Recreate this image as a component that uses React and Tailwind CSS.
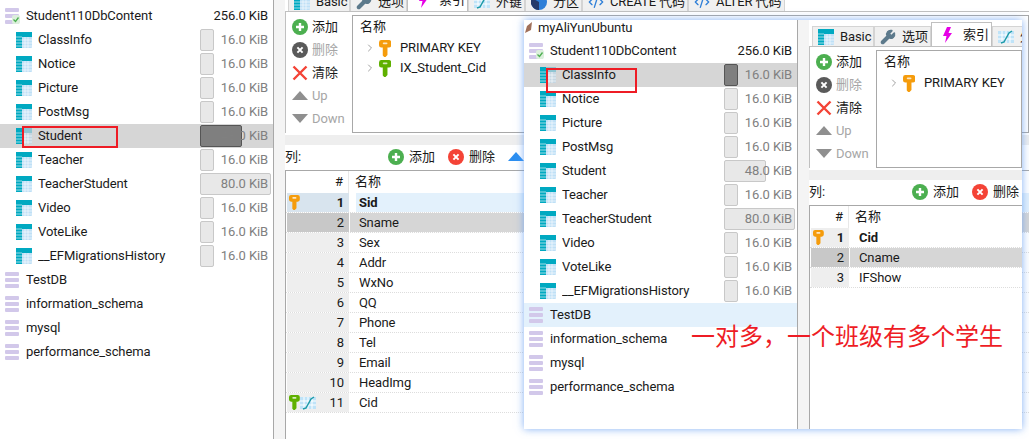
import React from "react";
import { ChevronRight, Wrench, CodeXml } from "lucide-react";

const tableItems = [
	{ name: "ClassInfo", size: 16 },
	{ name: "Notice", size: 16 },
	{ name: "Picture", size: 16 },
	{ name: "PostMsg", size: 16 },
	{ name: "Student", size: 48 },
	{ name: "Teacher", size: 16 },
	{ name: "TeacherStudent", size: 80 },
	{ name: "Video", size: 16 },
	{ name: "VoteLike", size: 16 },
	{ name: "__EFMigrationsHistory", size: 16 },
];

const otherDbs = ["TestDB", "information_schema", "mysql", "performance_schema"];

const studentColumns = [
	"Sid", "Sname", "Sex", "Addr", "WxNo", "QQ", "Phone", "Tel", "Email", "HeadImg", "Cid",
];

const TableIcon = ({ dim }) => (
	<svg width="16" height="16" viewBox="0 0 16 16" className="shrink-0">
		<rect x="0" y="0" width="16" height="16" rx="1" fill={dim ? "#c4d6e2" : "#bfe0f6"} />
		<rect x="0" y="0" width="16" height="5" fill={dim ? "#8fc5d2" : "#00a9c1"} />
		<rect x="0" y="0" width="6" height="16" fill="#00a9c1" />
		<path d="M6 8h10M6 11h10M6 14h10M9 5v11M12 5v11M0 5h6M0 8h6M0 11h6M0 14h6" stroke="#fff" strokeOpacity="0.6" strokeWidth="1" />
	</svg>
);

const DbIcon = ({ ok }) => (
	<svg width="16" height="16" viewBox="0 0 16 16" className="shrink-0">
		<rect x="1" y="0" width="14" height="4" rx="1" fill="#d2c8ea" />
		<rect x="1" y="6" width="14" height="4" rx="1" fill="#d2c8ea" />
		<rect x="1" y="12" width="14" height="4" rx="1" fill="#d2c8ea" />
		{ok && (
			<g>
				<rect x="8" y="7" width="8" height="9" rx="2" fill="#dcefdc" />
				<path d="M9.5 11.5l2 2 3-4" fill="none" stroke="#4caf50" strokeWidth="1.3" />
			</g>
		)}
	</svg>
);

const KeyIcon = ({ color, size = 18 }) => (
	<svg width={size * 0.72} height={size} viewBox="0 0 13 18" className="shrink-0">
		<path
			d="M2.5 0h8A2.5 2.5 0 0 1 13 2.5v3A2.5 2.5 0 0 1 10.5 8H9v8l-2 2H5.5L4 16.500V8H2.500A2.500 2.500 0 0 1 0 5.500v-3A2.500 2.500 0 0 1 2.500 0z"
			fill={color}
		/>
		<rect x="4" y="2.500" width="5" height="2" rx="1" fill="#fff" fillOpacity="0.75" />
	</svg>
);

const FkIcon = () => (
	<svg width="16" height="14" viewBox="0 0 16 14" className="shrink-0">
		<rect x="0" y="1" width="16" height="12" fill="#bfe3f8" />
		<path d="M0 5h16M0 9h16M4 1v12M8 1v12M12 1v12" stroke="#fff" strokeWidth="1" />
		<path d="M3 13l3-1 5-9 3-2" fill="none" stroke="#1d9aa8" strokeWidth="1.5" />
	</svg>
);

const ZapIcon = () => (
	<svg width="10" height="16" viewBox="0 0 10 16" className="shrink-0 mr-[5px]">
		<path d="M5 0h4L6.500 6H10L3 16l1.500-7H1z" fill="#e600e6" />
	</svg>
);

const PartitionIcon = () => (
	<svg width="16" height="16" viewBox="0 0 16 16" className="shrink-0">
		<circle cx="8" cy="8" r="8" fill="#2f7fd8" />
		<path d="M8 8L1 4a8 8 0 0 0 7 12z" fill="#243a6b" />
	</svg>
);

const CircleIcon = ({ color, plus }) => (
	<svg width="16" height="16" viewBox="0 0 16 16" className="shrink-0">
		<circle cx="8" cy="8" r="8" fill={color} />
		{plus ? (
			<path d="M8 4v8M4 8h8" stroke="#fff" strokeWidth="2.400" />
		) : (
			<path d="M5.400 5.400l5.200 5.200M10.600 5.400l-5.200 5.200" stroke="#fff" strokeWidth="2" />
		)}
	</svg>
);

const CrossIcon = () => (
	<svg width="16" height="16" viewBox="0 0 16 16" className="shrink-0">
		<path d="M1.500 1.500l13 13M14.500 1.500l-13 13" stroke="#f44336" strokeWidth="2.400" />
	</svg>
);

const Triangle = ({ down, color }) => (
	<svg width="16" height="9" viewBox="0 0 16 9" className="shrink-0">
		<path d={down ? "M0 0h16L8 9z" : "M8 0l8 9H0z"} fill={color} />
	</svg>
);

const TreeRow = ({ item, selected }) => {
	// bar width follows the table size
	const barWidth = item.size === 16 ? 14 : item.size === 48 ? 42 : 71;
	return (
		<div className={`flex items-center h-6 pl-[16px] ${selected ? "bg-[#d6d6d6]" : ""}`}>
			<TableIcon dim={selected} />
			<span className="ml-[6px] flex-1 truncate text-[#1a1a1a]">{item.name}</span>
			<div className="grid grid-cols-[68px] items-center mr-[5px] shrink-0">
				<div
					className={`col-start-1 row-start-1 h-[22px] rounded-[2px] border ${
						selected ? "bg-[#7f7f7f] border-[#555]" : "bg-[#e8e8e8] border-[#c8c8c8]"
					}`}
					style={{ width: barWidth }}
				/>
				<span className="col-start-1 row-start-1 text-right text-[#808080] z-10">
					{item.size}.0 KiB
				</span>
			</div>
		</div>
	);
};

const Tree = ({ selectedTable, hoverDb }) => (
	<div>
		<div className="flex items-center h-6 pl-[4px] pr-[5px]">
			<DbIcon ok />
			<span className="ml-[6px] flex-1 text-[#1a1a1a]">Student110DbContent</span>
			<span className="text-[#1a1a1a]">256.0 KiB</span>
		</div>
		{tableItems.map((item) => (
			<TreeRow key={item.name} item={item} selected={item.name === selectedTable} />
		))}
		{otherDbs.map((db) => (
			<div
				key={db}
				className={`flex items-center h-6 pl-[4px] ${db === hoverDb ? "bg-[#e3f1fc]" : ""}`}
			>
				<DbIcon />
				<span className="ml-[6px] text-[#1a1a1a]">{db}</span>
			</div>
		))}
	</div>
);

const Tab = ({ icon, label, active, widthClass }) => (
	<div
		className={`flex items-center gap-[6px] shrink-0 border border-b-0 ${widthClass} ${
			active ? "bg-white h-6 border-[#c0c0c0] pl-[10px]" : "bg-[#f0f0f0] h-5 border-[#d4d4d4] pl-[5px]"
		}`}
	>
		{icon}
		<span className="whitespace-nowrap text-[#1a1a1a]">{label}</span>
	</div>
);

const Tabs = ({ heightClass }) => (
	<div className={`flex items-end overflow-hidden pl-[3px] shrink-0 ${heightClass}`}>
		<Tab widthClass="w-[62px]" icon={<TableIcon />} label="Basic" />
		<Tab widthClass="w-[57px]" icon={<Wrench size={16} className="text-[#5d7a8c] fill-[#5d7a8c]" />} label="选项" />
		<Tab widthClass="w-[61px]" active icon={<ZapIcon />} label="索引" />
		<Tab widthClass="w-[57px]" icon={<FkIcon />} label="外键" />
		<Tab widthClass="w-[57px]" icon={<PartitionIcon />} label="分区" />
		<Tab widthClass="w-[106px]" icon={<CodeXml size={16} className="text-[#2f7fd8]" />} label="CREATE 代码" />
		<Tab widthClass="w-[97px]" icon={<CodeXml size={16} className="text-[#2f7fd8]" />} label="ALTER 代码" />
	</div>
);

const ToolButton = ({ icon, label, disabled }) => (
	<div className="flex items-center h-[23px] gap-[4px]">
		<span className="w-[16px] flex justify-center">{icon}</span>
		<span className={disabled ? "text-[#a6a6a6]" : "text-[#1a1a1a]"}>{label}</span>
	</div>
);

const ColumnRow = ({ index, name, keyIcon, fk, tone, gutterClass }) => {
	const gutterBg =
		tone === "active" ? "bg-[#d8e4ee]" : tone === "selected" ? "bg-[#c8c8c8]" : "bg-[#eeeeee]";
	const cellBg = tone === "selected" ? "bg-[#d6d6d6]" : "";
	return (
		<div className="flex h-5 border-b border-dotted border-[#dddddd]">
			<div className={`flex items-center pl-[2px] pr-[5px] ml-[1px] shrink-0 ${gutterClass} ${gutterBg}`}>
				{keyIcon}
				{fk && <FkIcon />}
				<span className={`ml-auto text-[#1a1a1a] ${index === 1 ? "font-bold" : ""}`}>{index}</span>
			</div>
			<div className={`flex-1 flex items-center ml-[1px] overflow-hidden ${cellBg}`}>
				<div
					className={`flex items-center h-full w-full text-[#1a1a1a] ${
						tone === "active" ? "ml-[6px] pl-[3px] bg-[#e3f1fc]" : "pl-[9px]"
					} ${index === 1 ? "font-bold" : ""}`}
				>
					{name}
				</div>
			</div>
		</div>
	);
};

const EditorPane = ({ tabsHeight, keys, rows, gutterClass }) => (
	<div className="flex-1 min-w-0 flex flex-col overflow-hidden">
		<Tabs heightClass={tabsHeight} />
		<div className="border-t border-[#c0c0c0] border-l flex">
			<div className="w-[66px] shrink-0 pl-[6px] pt-[3px]">
				<ToolButton icon={<CircleIcon color="#4caf50" plus />} label="添加" />
				<ToolButton icon={<CircleIcon color="#5a5a5a" />} label="删除" disabled />
				<ToolButton icon={<CrossIcon />} label="清除" />
				<ToolButton icon={<Triangle color="#8f8f8f" />} label="Up" disabled />
				<ToolButton icon={<Triangle color="#8f8f8f" down />} label="Down" disabled />
			</div>
			<div className="flex-1 mt-[3px] h-[118px] border border-[#a8a8a8] bg-white">
				<div className="h-[22px] pl-[7px] flex items-center text-[#1a1a1a]">名称</div>
				{keys.map((k) => (
					<div key={k.name} className="flex items-center h-5 pl-[11px] text-[#1a1a1a]">
						<ChevronRight size={12} strokeWidth={2} className="text-[#a0a0a0]" />
						<span className="ml-[3px] w-[21px]">
							<KeyIcon color={k.color} size={17} />
						</span>
						<span>{k.name}</span>
					</div>
				))}
			</div>
		</div>
		<div className="mt-[2px] h-[10px] bg-[#eeeeee] shrink-0" />
		<div className="flex items-center h-[25px] pb-[2px] shrink-0 text-[#1a1a1a]">
			<span className="w-[103px] shrink-0">列:</span>
			<div className="flex items-center gap-[5px] w-[60px] shrink-0">
				<CircleIcon color="#4caf50" plus />
				<span>添加</span>
			</div>
			<div className="flex items-center gap-[5px] w-[60px] shrink-0">
				<CircleIcon color="#f44336" />
				<span>删除</span>
			</div>
			<Triangle color="#2b8ef0" />
		</div>
		<div className="flex-1 border-t border-l border-[#a8a8a8] bg-white">
			<div className="flex h-[22px]">
				<div className={`shrink-0 ml-[1px] pr-[5px] text-right leading-[22px] text-[#1a1a1a] border-r border-[#e8e8e8] ${gutterClass}`}>
					#
				</div>
				<div className="pl-[6px] leading-[22px] text-[#1a1a1a]">名称</div>
			</div>
			{rows.map((r, i) => (
				<ColumnRow
					key={r.name}
					index={i + 1}
					name={r.name}
					tone={r.tone}
					keyIcon={r.keyColor && <KeyIcon color={r.keyColor} size={15} />}
					fk={r.fk}
					gutterClass={gutterClass}
				/>
			))}
		</div>
	</div>
);

const studentRows = studentColumns.map((name, i) => ({
	name,
	tone: i === 0 ? "active" : i === 1 ? "selected" : undefined,
	keyColor: i === 0 ? "#f59c0c" : i === 10 ? "#5fb000" : undefined,
	fk: i === 10,
}));

const classRows = [
	{ name: "Cid", keyColor: "#f59c0c" },
	{ name: "Cname", tone: "selected" },
	{ name: "IFShow" },
];

export default function App() {
	return (
		<div
			className="relative flex w-[1029px] h-[439px] overflow-hidden bg-white text-[13px] tracking-[-0.1px] font-['Roboto','Noto_Sans_CJK_SC',sans-serif]"
		>
			<div className="w-[273px] shrink-0 pt-[4px] border-r border-[#a8a8a8] box-content">
				<Tree selectedTable="Student" />
			</div>
			<div className="w-[11px] shrink-0 bg-[#f4f4f4]" />
			<EditorPane
				tabsHeight="h-[11px]"
				gutterClass="w-[62px]"
				keys={[
					{ name: "PRIMARY KEY", color: "#f59c0c" },
					{ name: "IX_Student_Cid", color: "#5fb000" },
				]}
				rows={studentRows}
			/>

			{/* second window dragged on top of the first */}
			<div className="absolute left-[524px] top-[20px] w-[498px] h-[409px] flex bg-white shadow-[0_0_8px_rgba(90,150,240,0.75)]">
				<div className="w-[273px] shrink-0 border-r border-[#a8a8a8] box-content">
					<div className="flex items-center h-[19px] pl-[1px] pb-[4px] overflow-hidden">
						<svg width="7" height="11" viewBox="0 0 7 11" className="shrink-0">
							<path d="M0 11l2-7 5-4-1 8z" fill="#a0705a" />
						</svg>
						<span className="ml-[6px] text-[#1a1a1a]">myAliYunUbuntu</span>
					</div>
					<Tree selectedTable="ClassInfo" hoverDb="TestDB" />
				</div>
				<div className="w-[11px] shrink-0 bg-[#f4f4f4]" />
				<EditorPane
					tabsHeight="h-[26px]"
					gutterClass="w-[38px]"
					keys={[{ name: "PRIMARY KEY", color: "#f59c0c" }]}
					rows={classRows}
				/>
			</div>

			{/* hand-drawn annotations */}
			<div className="absolute left-[22px] top-[126px] w-[96px] h-[22px] border-2 border-[#ee1c25]" />
			<div className="absolute left-[546px] top-[68px] w-[91px] h-[25px] border-2 border-[#ee1c25]" />
			<div className="absolute left-[691px] top-[318px] text-[24px] leading-[34px] tracking-normal whitespace-nowrap text-[#ee1c25] font-['Noto_Sans_CJK_SC',sans-serif]">
				一对多，一个班级有多个学生
			</div>
		</div>
	);
}
